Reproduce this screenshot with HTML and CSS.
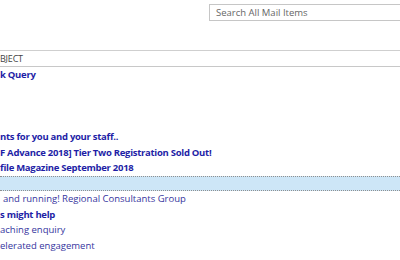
FILE: index.html
```html
<!DOCTYPE html>
<html lang="en">
<head>
    <meta charset="UTF-8">
    <title>Mail Items</title>
    <link rel="stylesheet" href="styles.css">
</head>
<body>
    <div class="toolbar">
        <div class="search">Search All Mail Items</div>
    </div>

    <div class="mail-list">
        <div class="col-header">BJECT</div>
        <div class="row unread">k Query</div>
        <div class="row"></div>
        <div class="row"></div>
        <div class="row"></div>
        <div class="row unread">nts for you and your staff..</div>
        <div class="row unread">F Advance 2018] Tier Two Registration Sold Out!</div>
        <div class="row unread">file Magazine September 2018</div>
        <div class="row selected"></div>
        <div class="row read lead">and running! Regional Consultants Group</div>
        <div class="row unread">s might help</div>
        <div class="row read">aching enquiry</div>
        <div class="row read">elerated engagement</div>
    </div>
</body>
</html>
```

FILE: styles.css
```css
body {
    margin: 0;
    font-family: 'Open Sans', sans-serif;
    background: #fff;
    overflow: hidden;
}

.toolbar {
    height: 50px;
    box-sizing: border-box;
    padding: 4px 0 0 209px;
}

.search {
    height: 17px;
    box-sizing: border-box;
    border: 1px solid #c6c6c6;
    border-right: none;
    padding-left: 6px;
    font-size: 9.5px;
    line-height: 15px;
    color: #666;
}

.mail-list {
    border-top: 1px solid #cfcfcf;
}

.col-header {
    height: 15px;
    line-height: 15px;
    font-size: 9px;
    letter-spacing: -0.2px;
    color: #444;
    border-bottom: 1px solid #c8c8c8;
}

.row {
    height: 15.5px;
    line-height: 15.5px;
    font-size: 9.5px;
    white-space: nowrap;
    box-sizing: border-box;
}

.unread {
    font-weight: bold;
    letter-spacing: -0.28px;
    color: #1e1ea6;
}

.read {
    color: #35359e;
}

.lead {
    padding-left: 3px;
}

.selected {
    background: #cde6f7;
    border-top: 1px dotted #8f8f8f;
    border-bottom: 1px dotted #8f8f8f;
}
```
